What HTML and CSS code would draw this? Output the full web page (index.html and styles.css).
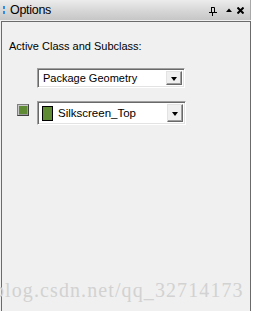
FILE: index.html
```html
<!DOCTYPE html>
<html lang="en">
<head>
    <meta charset="UTF-8">
    <meta name="viewport" content="width=device-width, initial-scale=1.0">
    <title>Options</title>
    <link rel="stylesheet" href="styles.css">
</head>
<body>
    <div class="window">
        <div class="titlebar">
            <span class="grip"><i></i><i></i></span>
            <span class="title">Options</span>
            <span class="tools">
                <svg class="pin" width="8" height="9" viewBox="0 0 8 9">
                    <path d="M2 0.5H5.5V5M2.5 0.5V5M0 5.5H8M3.5 5.5V9" stroke="#000" fill="none"/>
                </svg>
                <svg class="up" width="6" height="4" viewBox="0 0 6 4">
                    <path d="M0 4L3 0.5L6 4Z" fill="#000"/>
                </svg>
                <svg class="close" width="7" height="7" viewBox="0 0 7 7">
                    <path d="M0.5 0.5L6.5 6.5M6.5 0.5L0.5 6.5" stroke="#000" stroke-width="2"/>
                </svg>
            </span>
        </div>
        <div class="panel">
            <div class="label">Active Class and Subclass:</div>
            <div class="row row-class">
                <div class="combo">
                    <span class="combo-text">Package Geometry</span>
                    <span class="combo-btn"><b></b></span>
                </div>
            </div>
            <div class="row row-sub">
                <span class="color-box"></span>
                <div class="combo combo-tall">
                    <span class="swatch"></span>
                    <span class="combo-text">Silkscreen_Top</span>
                    <span class="combo-btn"><b></b></span>
                </div>
            </div>
            <div class="watermark">blog.csdn.net/qq_32714173</div>
        </div>
    </div>
</body>
</html>
```

FILE: styles.css
```css
body {
    margin: 0;
    background: #ffffff;
    font-family: "Liberation Sans", Arial, sans-serif;
    font-size: 11px;
    color: #000;
}
.window {
    width: 251px;
    height: 311px;
    background: #f0f0f0;
    overflow: hidden;
}
.titlebar {
    height: 20px;
    display: flex;
    align-items: center;
    background: linear-gradient(#ececec, #d8d8d8 50%, #c6c6c6);
    border-right: 1px solid #a8a8a8;
    box-sizing: border-box;
}
.grip {
    display: flex;
    flex-direction: column;
    gap: 2px;
    margin: 0 5px 0 3px;
}
.grip i {
    display: block;
    width: 2px;
    height: 3px;
    background: #2f8ee8;
}
.title {
    font-size: 12.5px;
    letter-spacing: -0.3px;
    flex: 1;
}
.tools {
    display: flex;
    align-items: center;
    margin-right: 6px;
}
.tools svg {
    display: block;
}
.tools .pin {
    margin-top: 2px;
}
.tools .up {
    margin-left: 9px;
}
.tools .close {
    margin-left: 5px;
}
.panel {
    position: relative;
    margin: 1px 0 0 1px;
    height: 290px;
    box-sizing: border-box;
    border: 1px solid #6b6b6b;
    border-bottom: 0;
    padding: 18px 7px 0;
}
.label {
    line-height: 13px;
}
.row {
    display: flex;
    align-items: center;
}
.row-class {
    margin-top: 15px;
    padding-left: 28px;
}
.row-sub {
    margin-top: 13px;
    padding-left: 8px;
    gap: 8px;
    align-items: flex-start;
}
.combo {
    width: 148px;
    height: 20px;
    box-sizing: border-box;
    display: flex;
    align-items: center;
    background: #fff;
    border: 1px solid;
    border-color: #a0a0a0 #fff #fff #a0a0a0;
    box-shadow: inset 1px 1px 0 #696969, inset -1px -1px 0 #e3e3e3;
    padding: 2px;
}
.combo-tall {
    width: 149px;
    height: 24px;
}
.combo-text {
    flex: 1;
    padding-left: 3px;
    font-size: 11px;
}
.combo-tall .combo-text {
    font-size: 11.5px;
    padding-left: 5px;
}
.combo-btn {
    width: 16px;
    align-self: stretch;
    background: #f0f0f0;
    border: 1px solid;
    border-color: #e3e3e3 #696969 #696969 #e3e3e3;
    box-shadow: inset -1px -1px 0 #a0a0a0;
    box-sizing: border-box;
    display: flex;
    align-items: center;
    justify-content: center;
}
.combo-btn b {
    width: 0;
    height: 0;
    border-left: 3.5px solid transparent;
    border-right: 3.5px solid transparent;
    border-top: 4px solid #000;
    margin-top: 1px;
}
.swatch {
    width: 9px;
    height: 13px;
    background: #5e8b33;
    border: 1px solid #000;
    margin-left: 2px;
}
.color-box {
    width: 12px;
    height: 12px;
    margin-top: 3px;
    box-sizing: border-box;
    border: 1px solid;
    border-color: #808080 #404040 #404040 #808080;
    background: #5e8b33;
    box-shadow: inset 1px 1px 0 #c8c8c8, inset -1px -1px 0 #9a9a9a;
}
.watermark {
    position: absolute;
    left: -8px;
    top: 257px;
    font-family: "Liberation Serif", "Times New Roman", serif;
    font-size: 20px;
    letter-spacing: 1.1px;
    color: #d2d2d2;
    white-space: nowrap;
}
```
